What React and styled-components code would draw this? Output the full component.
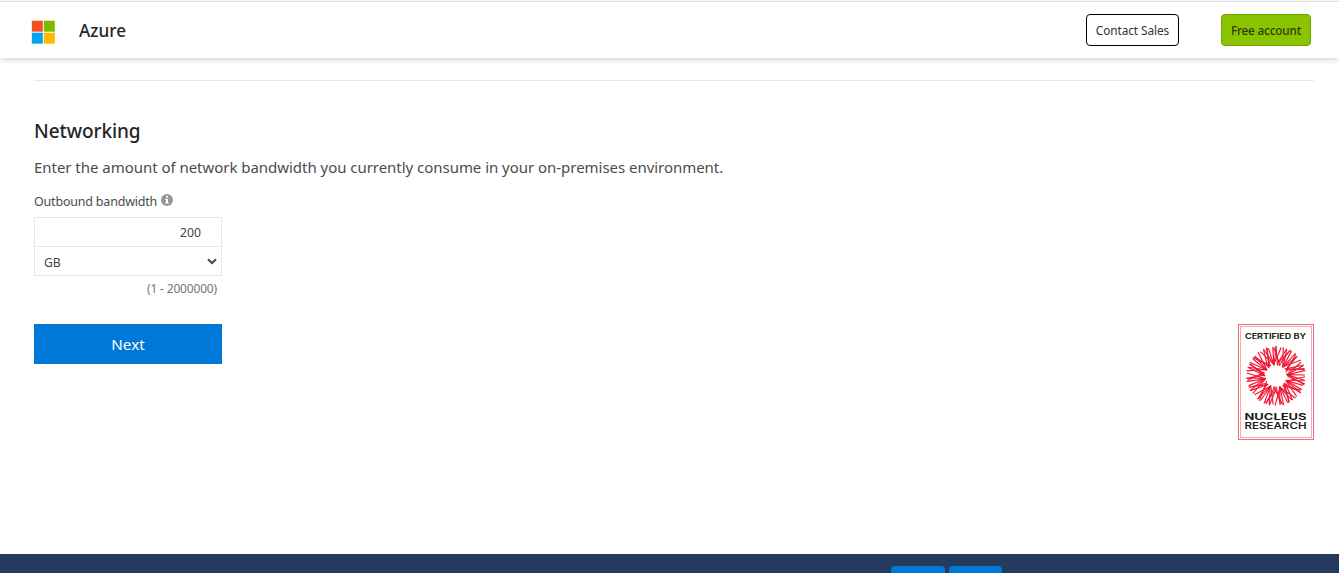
import React from "react";
import styled, { createGlobalStyle } from "styled-components";

const GlobalStyle = createGlobalStyle`
  * { box-sizing: border-box; }
  html, body { margin: 0; padding: 0; background: #fff; overflow: hidden; }
  body { font-family: "Segoe UI", "Noto Sans", "Open Sans", sans-serif; color: #4c4c4c; }
`;

const Page = styled.div`
  display: flex;
  flex-direction: column;
  height: 573px;
  overflow: hidden;
`;

const Header = styled.header`
  flex: none;
  display: flex;
  align-items: center;
  height: 57px;
  margin-top: 1px;
  padding: 0 28px 1px 31px;
  border-top: 1px solid #dcdddd;
  box-shadow: 0 2px 6px rgba(0, 0, 0, 0.16);
`;

const Logo = styled.svg`
  display: block;
  width: 24px;
  height: 24px;
  margin-top: 4px;
`;

const Brand = styled.span`
  flex: 1;
  margin-left: 24px;
  padding-top: 2px;
  font-size: 17.2px;
  line-height: 24px;
  font-weight: 500;
  color: #262626;
`;

const HeaderButton = styled.button`
  height: 32px;
  width: ${(p) => p.$width};
  margin-left: ${(p) => p.$gap || "0"};
  padding: 1px 0 0;
  border: 1px solid ${(p) => (p.$primary ? "#6fa000" : "#000")};
  border-radius: 4px;
  background: ${(p) => (p.$primary ? "#8ac400" : "#fff")};
  color: ${(p) => (p.$primary ? "#2c3d00" : "#333")};
  font-family: inherit;
  font-size: 11.8px;
  font-weight: ${(p) => (p.$primary ? 500 : 400)};
  letter-spacing: ${(p) => (p.$primary ? "-0.2px" : "-0.07px")};
  white-space: nowrap;
`;

const Main = styled.main`
  flex: 1;
  margin: 22px 25px 0 34px;
  border-top: 1px solid #e6e6e6;
  padding-top: 36px;
`;

const Title = styled.h2`
  margin: 0;
  font-size: 19px;
  line-height: 28px;
  font-weight: 500;
  letter-spacing: -0.08px;
  color: #262626;
`;

const Intro = styled.p`
  margin: 10px 0 0;
  font-size: 15px;
  line-height: 24px;
  letter-spacing: -0.035px;
`;

const FieldLabel = styled.label`
  display: flex;
  align-items: center;
  gap: 4px;
  margin-top: 12px;
  height: 20px;
  padding-top: 1px;
  font-size: 12.5px;
  line-height: 20px;
  letter-spacing: -0.2px;
`;

const InfoIcon = styled.svg`
  display: block;
  width: 12px;
  height: 12px;
  margin-top: -4px;
`;

const FieldGroup = styled.div`
  width: 188px;
  margin-top: 6px;
  border: 1px solid #e6e6e6;
`;

const AmountInput = styled.input`
  display: block;
  width: 100%;
  height: 28px;
  padding: 1px 20px 0 9px;
  border: 0;
  outline: 0;
  background: #fff;
  color: #454545;
  font: 12.2px "Noto Sans", sans-serif;
  text-align: right;
`;

const UnitSelect = styled.button`
  display: flex;
  align-items: center;
  justify-content: space-between;
  width: 100%;
  height: 29px;
  padding: 3px 4px 0 9px;
  border: 0;
  border-top: 1px solid #e6e6e6;
  background: #fff;
  color: #454545;
  font: 12.2px "Noto Sans", sans-serif;
`;

const Chevron = styled.svg`
  display: block;
  width: 10px;
  height: 7px;
  margin-top: -3px;
`;

const RangeHint = styled.div`
  width: 183px;
  margin-top: 4px;
  font-size: 12px;
  line-height: 18px;
  letter-spacing: -0.17px;
  text-align: right;
  color: #757575;
`;

const ActionRow = styled.div`
  display: flex;
  justify-content: space-between;
  align-items: flex-start;
  margin-top: 26px;
`;

const NextButton = styled.button`
  width: 188px;
  height: 40px;
  padding: 0;
  border: 0;
  background: #0078d7;
  color: #fff;
  font-family: inherit;
  font-size: 15.2px;
`;

const Badge = styled.svg`
  display: block;
  width: 76px;
  height: 116px;
`;

const Footer = styled.footer`
  flex: none;
  display: flex;
  gap: 4px;
  height: 19px;
  padding: 12px 0 0 891px;
  background: #243a5e;
  overflow: hidden;
`;

const FooterButton = styled.div`
  flex: none;
  width: ${(p) => p.$width};
  height: 30px;
  border-radius: 4px;
  background: #0078d7;
`;

const SKEWS = [0.3, -0.4, 0.08, -0.16, 0.44, -0.28, 0.16, -0.46, 0.24, -0.08, 0.36];

const RAYS = Array.from({ length: 84 }, (_, i) => {
  const angle = (i / 84) * Math.PI * 2;
  const skew = SKEWS[(i * 4) % SKEWS.length];
  const outer = 28.6 + ((i * 7) % 5) * 0.35;
  const inner = 10.6 + ((i * 5) % 4) * 0.5;
  return {
    x1: 38 + Math.cos(angle - skew / 2) * inner,
    y1: 52 + Math.sin(angle - skew / 2) * inner,
    x2: 38 + Math.cos(angle + skew / 2) * outer,
    y2: 52 + Math.sin(angle + skew / 2) * outer,
  };
});

function NucleusBadge() {
  return (
    <Badge viewBox="0 0 76 116" role="img" aria-label="Certified by Nucleus Research">
      <rect x="0.5" y="0.5" width="75" height="115" fill="#fff" stroke="#ee6b7a" />
      <rect x="2.5" y="2.5" width="71" height="111" fill="none" stroke="#f6a9b1" />
      <g stroke="#f01631" strokeWidth="1.15">
        {RAYS.map((r, i) => (
          <line key={i} {...r} />
        ))}
      </g>
      <g fill="#1c1c1c" fontFamily="Inter, sans-serif">
        <text x="7" y="14.6" fontSize="7" fontWeight="700" textLength="61" lengthAdjust="spacingAndGlyphs">CERTIFIED BY</text>
        <text x="6.5" y="95.6" fontSize="8.9" fontWeight="700" textLength="62" lengthAdjust="spacingAndGlyphs">NUCLEUS</text>
        <text x="6.5" y="105" fontSize="8.9" fontWeight="600" textLength="62" lengthAdjust="spacingAndGlyphs">RESEARCH</text>
      </g>
    </Badge>
  );
}

export default function App() {
  return (
    <Page>
      <GlobalStyle />
      <Header>
        <Logo viewBox="0 0 24 24">
          <rect x="0.8" y="0.7" width="11" height="11" fill="#f25022" />
          <rect x="12.8" y="0.7" width="11" height="11" fill="#7fba00" />
          <rect x="0.8" y="12.7" width="11" height="11" fill="#00a4ef" />
          <rect x="12.8" y="12.7" width="11" height="11" fill="#ffb900" />
        </Logo>
        <Brand>Azure</Brand>
        <HeaderButton $width="93px">Contact Sales</HeaderButton>
        <HeaderButton $primary $width="90px" $gap="42px">Free account</HeaderButton>
      </Header>
      <Main>
        <Title>Networking</Title>
        <Intro>Enter the amount of network bandwidth you currently consume in your on-premises environment.</Intro>
        <FieldLabel htmlFor="bandwidth">
          Outbound bandwidth
          <InfoIcon viewBox="0 0 12 12">
            <circle cx="6" cy="6" r="6" fill="#969696" />
            <path d="M5 1.8h2v1.8H5zM4.2 4.8H7v3.7h.8v1.1H4.2V8.5H5V5.9h-.8z" fill="#fff" />
          </InfoIcon>
        </FieldLabel>
        <FieldGroup>
          <AmountInput id="bandwidth" defaultValue="200" />
          <UnitSelect type="button">
            GB
            <Chevron viewBox="0 0 10 7">
              <path d="M1 1.2L5 5L9 1.2" fill="none" stroke="#454545" strokeWidth="2" />
            </Chevron>
          </UnitSelect>
        </FieldGroup>
        <RangeHint>(1 - 2000000)</RangeHint>
        <ActionRow>
          <NextButton>Next</NextButton>
          <NucleusBadge />
        </ActionRow>
      </Main>
      <Footer>
        <FooterButton $width="54px" />
        <FooterButton $width="53px" />
      </Footer>
    </Page>
  );
}
